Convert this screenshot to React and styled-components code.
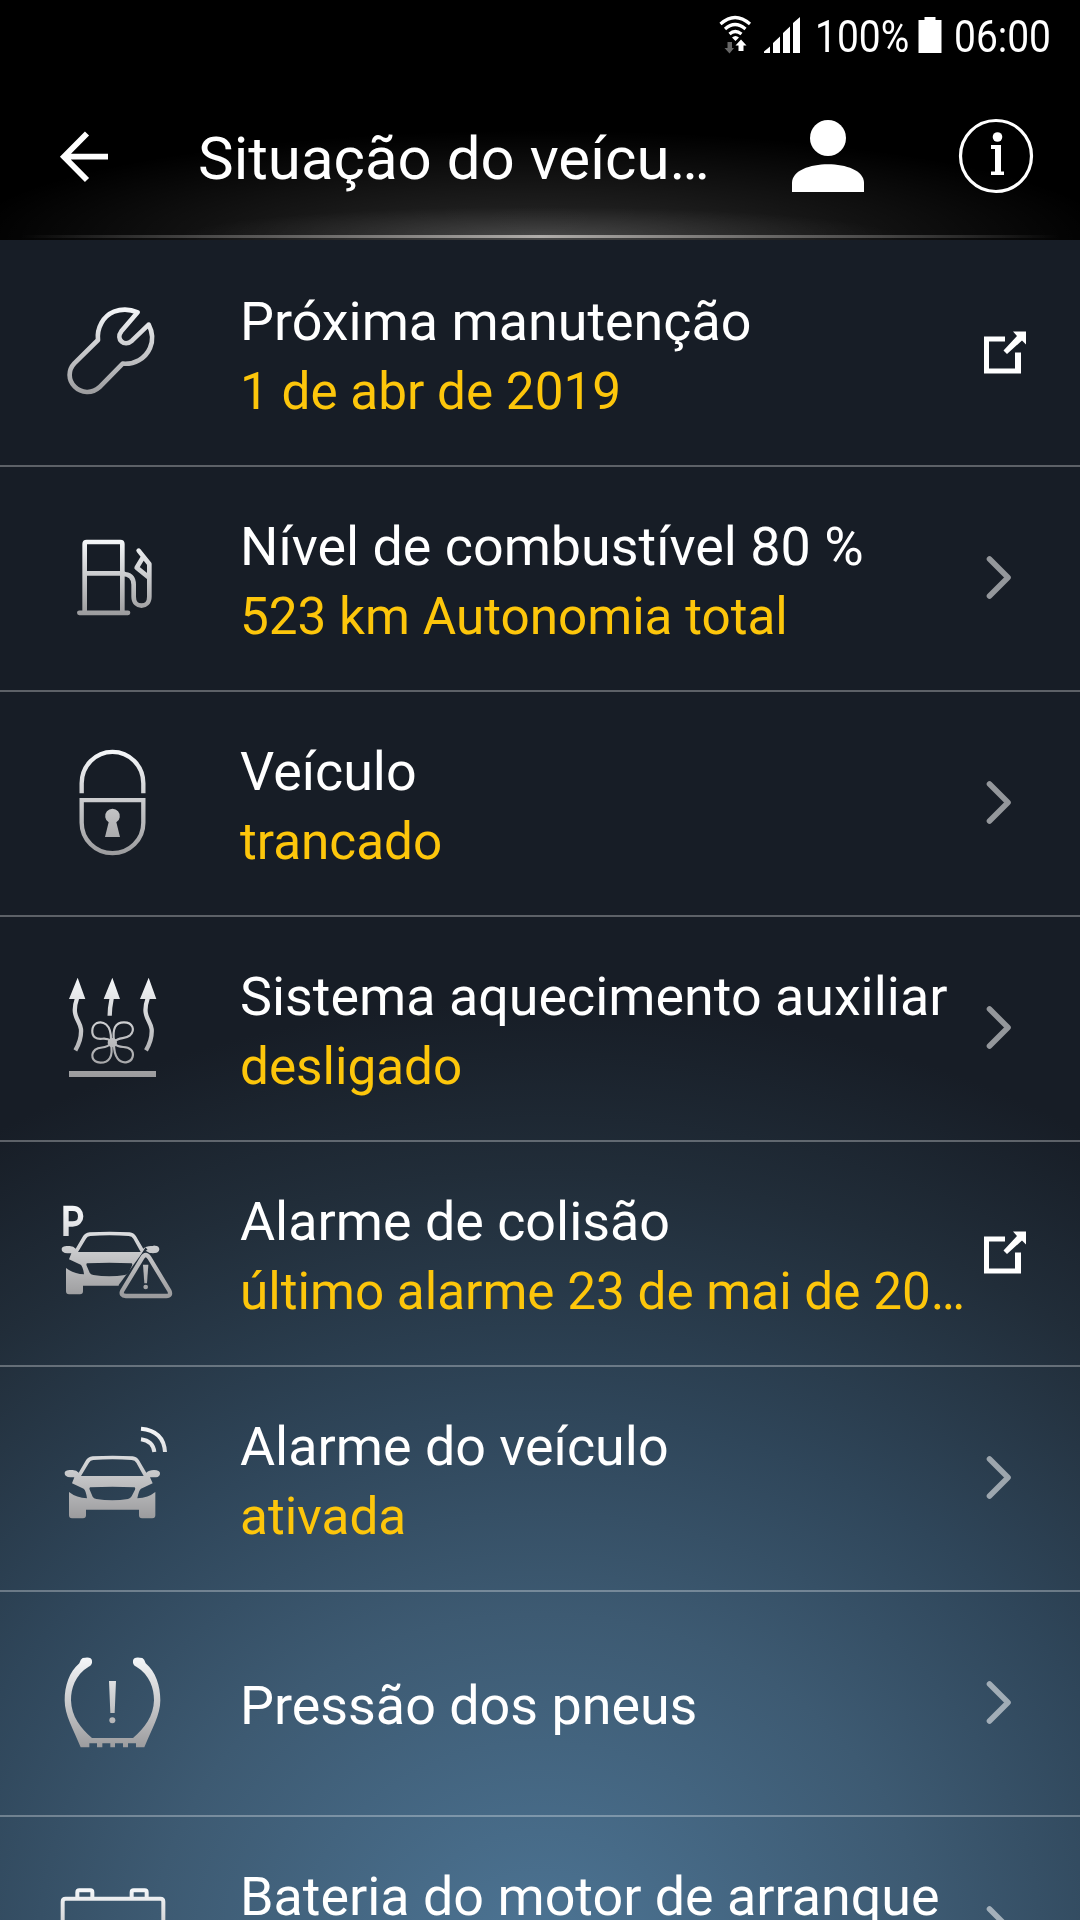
import React from "react";
import styled, { createGlobalStyle } from "styled-components";

const GlobalStyle = createGlobalStyle`
  * {
    box-sizing: border-box;
  }

  body {
    margin: 0;
    background: #000;
    font-family: Roboto, "Noto Sans", sans-serif;
  }
`;

const Screen = styled.div`
  width: 1080px;
  height: 1920px;
  overflow: hidden;
  display: flex;
  flex-direction: column;
  color: #fff;
  background: #000;
`;

const Top = styled.div`
  height: 240px;
  flex: none;
  display: flex;
  flex-direction: column;
  background:
    linear-gradient(90deg, transparent 2%, #5c5b5a 25%, #b0adaa 50%, #5c5b5a 75%, transparent 98%) 0 235px / 100% 3px no-repeat,
    radial-gradient(ellipse 360px 30px at 50% 237px, rgba(255, 255, 255, 0.14), transparent),
    radial-gradient(ellipse 580px 110px at 50% 240px, rgba(255, 255, 255, 0.17), transparent),
    #000;
`;

const StatusBar = styled.div`
  height: 72px;
  display: flex;
  justify-content: flex-end;
  align-items: flex-start;
  padding-right: 27px;
`;

const StatusIcons = styled.svg`
  width: 100px;
  height: 72px;
  margin-right: -1px;
`;

const StatusText = styled.span`
  width: ${(props) => props.$width}px;
  margin-left: ${(props) => props.$gap}px;
  padding-top: 10px;
  font-size: 45px;
  line-height: 53px;
  white-space: nowrap;
  transform: scaleX(0.865);
  transform-origin: left;
`;

const Battery = styled.svg`
  width: 24px;
  height: 72px;
  margin-left: 8px;
`;

const AppBar = styled.header`
  height: 168px;
  display: flex;
  align-items: flex-start;
`;

const BackIcon = styled.svg`
  width: 198px;
  height: 168px;
`;

const Title = styled.h1`
  width: 594px;
  margin: 0;
  padding-top: 52px;
  font-size: 60px;
  line-height: 70px;
  font-weight: 400;
  white-space: nowrap;
`;

const HeaderIcons = styled.svg`
  width: 288px;
  height: 168px;
`;

const List = styled.main`
  flex: 1;
  padding-top: 2px;
  overflow: hidden;
  background: radial-gradient(
      ellipse 1080px 960px at 50% 1720px,
      #4d7595 0%,
      #3d5a72 36%,
      #2f465a 57%,
      #212d39 82%,
      #171d26 100%
    );
`;

const Row = styled.div`
  height: 225px;
  display: flex;
  align-items: center;
  padding-left: 40px;
  border-bottom: 2px solid rgba(255, 255, 255, 0.3);
`;

const RowIcon = styled.svg`
  width: 150px;
  height: 137px;
  flex: none;
`;

const RowText = styled.div`
  flex: 1;
  margin-left: 50px;
  padding-top: ${(props) => (props.$single ? 4 : 6)}px;
  white-space: nowrap;
`;

const Label = styled.div`
  font-size: 53.85px;
  line-height: 70px;
`;

const Value = styled.div`
  font-size: 51.25px;
  line-height: 70px;
  color: #fdc60b;
`;

const Action = styled.svg`
  width: 100px;
  height: 60px;
  margin-bottom: 4px;
  flex: none;
`;

// 아이콘에 공통으로 쓰는 그라데이션
const Shade = ({ id, from, to }) => (
  <linearGradient id={id} gradientUnits="userSpaceOnUse" x1="0" y1={from} x2="0" y2={to}>
    <stop offset="0" stopColor="#f6f8fa" />
    <stop offset="1" stopColor="#9b9b9d" />
  </linearGradient>
);

const Wrench = () => (
  <RowIcon viewBox="0 15 450 411">
    <Shade id="wrench" from={80} to={345} />
    <path
      d="M293 97C270 87 245 86 222 95C190 108 170 143 174 180L103 250C84 270 84 300 104 320C124 340 156 342 178 322L248 251C283 254 316 236 330 204C340 181 338 157 326 134L276 182C253 202 226 178 244 154Z"
      fill="none"
      stroke="url(#wrench)"
      strokeWidth="14"
      strokeLinejoin="round"
    />
  </RowIcon>
);

const Fuel = () => (
  <RowIcon viewBox="0 0 450 411">
    <Shade id="fuel" from={88} to={315} />
    <g fill="none" stroke="url(#fuel)" strokeWidth="14" strokeLinecap="round" strokeLinejoin="round">
      <path d="M134 306V102Q134 96 140 96H241Q247 96 247 102V306M118 308.500H264M134 190H250" />
      <path d="M247 192C270 192 281 204 281 224V260C281 296 328 296 328 260V162L296 122M309 142L290 173L327 203" />
    </g>
  </RowIcon>
);

const Lock = () => (
  <RowIcon viewBox="0 15 450 411">
    <Shade id="lock" from={60} to={375} />
    <g fill="none" stroke="url(#lock)" strokeWidth="13">
      <path d="M125 190V160A92 94 0 0 1 310 160V190M125 210.500H310V278A92 91 0 0 1 125 278Z" />
      <path
        d="M195 321L206 277A22 22 0 1 1 229 277L240 321Z"
        fill="url(#lock)"
        stroke="none"
      />
    </g>
  </RowIcon>
);

const Heater = () => (
  <RowIcon viewBox="0 0 450 411">
    <Shade id="heater" from={55} to={350} />
    <g fill="url(#heater)">
      <path d="M113 53L136 117H87ZM217 53L240 117H191ZM326 53L349 117H300ZM87 333H348V351H87Z" />
      <circle cx="217" cy="248" r="14" />
    </g>
    <g fill="none" stroke="url(#heater)" strokeWidth="13">
      <path d="M111 115C92 170 120 180 123 208Q125 240 106 271M323 115C304 170 332 180 335 208Q337 240 318 271M215 115Q209 145 209 167" />
    </g>
    <g fill="none" stroke="url(#heater)" strokeWidth="6.500">
      <path d="M213 240C214 192 188 181 169 190C153 199 154 224 165 232C181 244 195 227 213 243" />
      <path d="M222 243C217 205 226 187 252 187C279 187 286 211 270 226C255 239 237 229 222 246" />
      <path d="M222 253C222 292 238 309 258 307C281 303 283 280 273 269C256 253 241 270 222 250" />
      <path d="M213 252C220 289 208 308 181 308C154 306 151 283 166 269C181 257 197 269 213 250" />
    </g>
  </RowIcon>
);

const carBody =
  "M74 190C74 181 84 180 98 180Q110 180 116 188L137 152Q143 141 158 139Q218 135 278 139Q291 141 297 151L319 188Q327 180 342 180Q360 181 360 190Q360 201 348 202H330L338 220L303 236Q296 242 292 265Q325 263 346 246V316Q346 325 337 325H306Q297 325 297 316V299H138V316Q138 325 129 325H96Q87 325 87 316V246Q110 264 141 265Q138 242 131 236L96 220L103 202H91Q74 201 74 190ZM123 198H311L289 158Q285 151 275 150Q218 146 160 150Q151 151 147 158ZM150 232Q147 234 149 239L158 260Q161 266 169 267Q217 275 264 267Q271 266 275 259L285 239Q287 234 284 232Q217 228 150 232Z";

const CrashAlarm = () => (
  <RowIcon viewBox="0 0 450 411">
    <Shade id="crash" from={60} to={335} />
    <mask id="crashCut">
      <path d="M0 0H450V411H0Z" fill="#fff" />
      <path d="M317 194L229 346H420Z" fill="#000" stroke="#000" strokeWidth="8" />
      <path d="M317 190L360 225V350H240L236 300Z" fill="#000" />
    </mask>
    <g mask="url(#crashCut)">
      <path d={carBody} transform="translate(-9 3)" fill="url(#crash)" fillRule="evenodd" />
    </g>
    <path d="M330 190Q337 180 345 182Q358 183 358 193Q357 204 344 204H329L317 197Z" fill="url(#crash)" />
    <path
      d="M307 218Q317 202 328 218L388 317Q395 333 379 333H258Q240 332 247 317Z"
      fill="none"
      stroke="url(#crash)"
      strokeWidth="13"
    />
    <path d="M309 239H325L321 295H313Z" fill="url(#crash)" />
    <circle cx="317" cy="306" r="7" fill="url(#crash)" />
    <path
      d="M78 153V70H98C130 70 130 117 98 117H80"
      fill="none"
      stroke="url(#crash)"
      strokeWidth="16"
    />
  </RowIcon>
);

const CarAlarm = () => (
  <RowIcon viewBox="0 0 450 411">
    <Shade id="alarm" from={50} to={325} />
    <path d={carBody} fill="url(#alarm)" fillRule="evenodd" />
    <path
      d="M303 56Q371 62 375 126M303 88Q339 93 343 126"
      fill="none"
      stroke="url(#alarm)"
      strokeWidth="12"
    />
  </RowIcon>
);

const Tire = () => (
  <RowIcon viewBox="0 -15 450 411">
    <Shade id="tire" from={50} to={325} />
    <path
      d="M128 54Q154 48 156 62Q158 74 146 80C105 105 93 145 93 181C94 229 122 265 156 294H279C313 265 341 229 342 181C342 145 330 105 289 80Q277 74 279 62Q281 48 307 54Q313 57 317 70C347 95 361 138 361 181C361 226 336 265 313 322H288V310H264V322H249V310H225V322H211V310H187V322H171V310H148V322H122C99 265 74 226 74 181C74 138 88 95 118 70Q122 57 128 54ZM207 123H228L224 219H211Z"
      fill="url(#tire)"
    />
    <circle cx="217" cy="241" r="9" fill="url(#tire)" />
  </RowIcon>
);

const CarBattery = () => (
  <RowIcon viewBox="0 -3 450 411">
    <Shade id="battery" from={80} to={360} />
    <path
      d="M68 340V122Q68 113 77 113H361Q370 113 370 122V340ZM112 112V94Q112 88 118 88H151Q157 88 157 94V112M275 112V94Q275 88 281 88H314Q320 88 320 94V112"
      fill="none"
      stroke="url(#battery)"
      strokeWidth="12"
    />
  </RowIcon>
);

const Chevron = () => (
  <Action viewBox="0 0 100 60">
    <path
      d="M9.500 12L28 30.500L9.500 49"
      fill="none"
      stroke="#fff"
      strokeOpacity="0.54"
      strokeWidth="5.600"
      strokeLinecap="round"
      strokeLinejoin="round"
    />
  </Action>
);

const OpenLink = () => (
  <Action viewBox="0 0 100 60">
    <path
      d="M25 14.500V19.500H9V46.500H35V30.500H41V51.500H4V14.500ZM33 9.500H46V22.500L42 18.500L27 32L23.500 28.500L37 14Z"
      fill="#fff"
    />
  </Action>
);

const rows = [
  { icon: <Wrench />, label: "Próxima manutenção", value: "1 de abr de 2019", link: true },
  { icon: <Fuel />, label: "Nível de combustível 80 %", value: "523 km Autonomia total" },
  { icon: <Lock />, label: "Veículo", value: "trancado" },
  { icon: <Heater />, label: "Sistema aquecimento auxiliar", value: "desligado" },
  { icon: <CrashAlarm />, label: "Alarme de colisão", value: "último alarme 23 de mai de 20…", link: true },
  { icon: <CarAlarm />, label: "Alarme do veículo", value: "ativada" },
  { icon: <Tire />, label: "Pressão dos pneus" },
  { icon: <CarBattery />, label: "Bateria do motor de arranque", value: "" },
];

const App = () => {
  return (
    <Screen>
      <GlobalStyle />
      <Top>
        <StatusBar>
          {/* 와이파이, 신호 세기 */}
          <StatusIcons viewBox="0 0 100 72">
            <g fill="none" stroke="#fff" strokeWidth="3.200">
              <path d="M4.500 24Q19 11 34 24M9 29Q19 20 29.500 29M13.500 34Q19 29 25.500 34" />
            </g>
            <path d="M16 37.500Q19.500 34.500 23 37.500L19.500 41ZM25 39.500L30.500 45.500H27.500V51H22.500V45.500H19.500Z" fill="#fff" />
            <path d="M11.500 42H16V48H18L13.500 53.500L8.500 48H11.500Z" fill="#666" />
            <path d="M48 53V51.500L54 46.500V53ZM57 53V43L64 36.500V53ZM67 53V33L74 26.500V53ZM77 53V23L84 17V53Z" fill="#fff" />
          </StatusIcons>
          <StatusText $width={95} $gap={0}>100%</StatusText>
          <Battery viewBox="0 0 24 72">
            <path d="M0.500 20H6.500V17H17.500V20H23.500V53H0.500Z" fill="#fff" />
          </Battery>
          <StatusText $width={99} $gap={12}>06:00</StatusText>
        </StatusBar>
        <AppBar>
          <BackIcon viewBox="0 0 198 168">
            <path
              d="M87 61.500L64 84.700L87 108M64 84.700H108"
              fill="none"
              stroke="#fff"
              strokeWidth="5.800"
            />
          </BackIcon>
          <Title>Situação do veícu…</Title>
          <HeaderIcons viewBox="0 0 288 168">
            <circle cx="36" cy="66" r="18" fill="#fff" />
            <path d="M0 120V111C0 86 72 86 72 111V120Z" fill="#fff" />
            <circle cx="204" cy="84" r="35.500" fill="none" stroke="#fff" strokeWidth="3.200" />
            <circle cx="205.500" cy="65" r="4.800" fill="#fff" />
            <path d="M199 73H209V99.500H212V103H199V99.500H203V77H199Z" fill="#fff" />
          </HeaderIcons>
        </AppBar>
      </Top>
      <List>
        {rows.map((row) => (
          <Row key={row.label}>
            {row.icon}
            <RowText $single={row.value === undefined}>
              <Label>{row.label}</Label>
              {row.value !== undefined && <Value>{row.value || "\u00a0"}</Value>}
            </RowText>
            {row.link ? <OpenLink /> : <Chevron />}
          </Row>
        ))}
      </List>
    </Screen>
  );
};

export default App;
